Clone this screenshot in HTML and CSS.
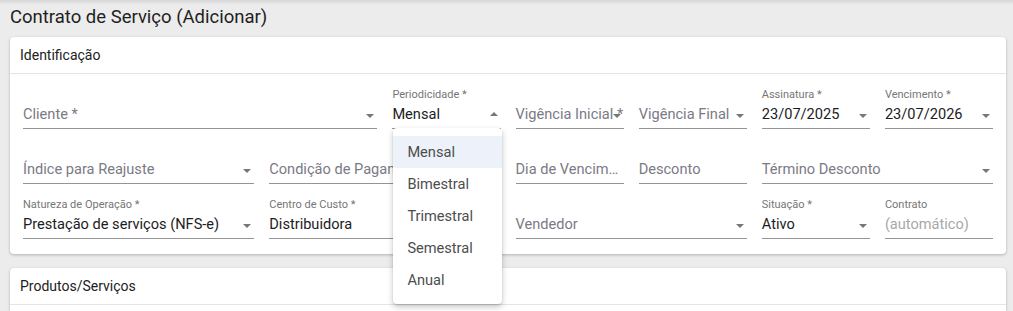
FILE: index.html
```html
<!DOCTYPE html>
<html lang="pt-BR">
<head>
    <meta charset="UTF-8">
    <meta name="viewport" content="width=device-width, initial-scale=1.0">
    <title>Contrato de Serviço</title>
    <link rel="stylesheet" href="styles.css">
</head>
<body>
    <div class="page">
        <h1 class="page-title">Contrato de Serviço (Adicionar)</h1>

        <!-- Identificação -->
        <div class="card">
            <div class="card-header">Identificação</div>
            <div class="card-body form-grid">
                <!-- row 1 -->
                <div class="field span-3">
                    <div class="control"><span class="text placeholder">Cliente *</span><span class="caret"></span></div>
                </div>
                <div class="field open">
                    <label class="float">Periodicidade *</label>
                    <div class="control"><span class="text">Mensal</span><span class="caret up"></span></div>
                    <ul class="menu">
                        <li class="active">Mensal</li>
                        <li>Bimestral</li>
                        <li>Trimestral</li>
                        <li>Semestral</li>
                        <li>Anual</li>
                    </ul>
                </div>
                <div class="field">
                    <div class="control"><span class="text placeholder">Vigência Inicial *</span><span class="caret"></span></div>
                </div>
                <div class="field">
                    <div class="control"><span class="text placeholder">Vigência Final</span><span class="caret"></span></div>
                </div>
                <div class="field">
                    <label class="float">Assinatura *</label>
                    <div class="control"><span class="text">23/07/2025</span><span class="caret"></span></div>
                </div>
                <div class="field">
                    <label class="float">Vencimento *</label>
                    <div class="control"><span class="text">23/07/2026</span><span class="caret"></span></div>
                </div>

                <!-- row 2 -->
                <div class="field span-2">
                    <div class="control"><span class="text placeholder">Índice para Reajuste</span><span class="caret"></span></div>
                </div>
                <div class="field span-2">
                    <div class="control"><span class="text placeholder">Condição de Pagamento</span><span class="caret"></span></div>
                </div>
                <div class="field">
                    <div class="control"><span class="text placeholder ellipsis">Dia de Vencimento</span></div>
                </div>
                <div class="field">
                    <div class="control"><span class="text placeholder">Desconto</span></div>
                </div>
                <div class="field span-2">
                    <div class="control"><span class="text placeholder">Término Desconto</span><span class="caret"></span></div>
                </div>

                <!-- row 3 -->
                <div class="field span-2">
                    <label class="float">Natureza de Operação *</label>
                    <div class="control"><span class="text">Prestação de serviços (NFS-e)</span><span class="caret"></span></div>
                </div>
                <div class="field span-2">
                    <label class="float">Centro de Custo *</label>
                    <div class="control"><span class="text">Distribuidora</span><span class="caret"></span></div>
                </div>
                <div class="field span-2">
                    <div class="control"><span class="text placeholder">Vendedor</span><span class="caret"></span></div>
                </div>
                <div class="field">
                    <label class="float">Situação *</label>
                    <div class="control"><span class="text">Ativo</span><span class="caret"></span></div>
                </div>
                <div class="field">
                    <label class="float">Contrato</label>
                    <div class="control"><span class="text muted">(automático)</span></div>
                </div>
            </div>
        </div>

        <!-- Produtos/Serviços -->
        <div class="card">
            <div class="card-header">Produtos/Serviços</div>
            <div class="card-body empty"></div>
        </div>
    </div>
</body>
</html>
```

FILE: styles.css
```css
body {
    font-family: Roboto, "Liberation Sans", Arial, sans-serif;
    margin: 0;
    padding: 0;
    background: linear-gradient(#d6d6d6 0, #ececec 5px) no-repeat, #ececec;
    color: #212121;
}

.page {
    padding: 0 7px 0 10px;
}

.page-title {
    font-size: 18.5px;
    font-weight: 400;
    line-height: 22px;
    margin: 0;
    padding: 6px 0 9px 0;
    color: #1f1f1f;
}

.card {
    background-color: #fff;
    border-radius: 4px;
    box-shadow: 0 1px 3px rgba(0, 0, 0, 0.25);
    margin-bottom: 14px;
}

.card-header {
    height: 36px;
    line-height: 37px;
    padding: 0 10px;
    font-size: 14px;
    color: #212121;
    border-bottom: 1px solid #e4e4e4;
}

.card-body {
    padding: 10px 13px 15px 13px;
}

.card-body.empty {
    height: 80px;
}

/* form grid */
.form-grid {
    display: grid;
    grid-template-columns: repeat(8, 1fr);
    column-gap: 15px;
    row-gap: 10px;
}

.span-2 {
    grid-column: span 2;
}

.span-3 {
    grid-column: span 3;
}

.field {
    position: relative;
    display: flex;
    flex-direction: column;
    justify-content: flex-end;
    height: 45px;
    box-sizing: border-box;
    border-bottom: 1px solid #949494;
    min-width: 0;
}

.float {
    font-size: 11px;
    line-height: 13px;
    color: #767676;
    margin-bottom: 3px;
    white-space: nowrap;
}

.control {
    display: flex;
    align-items: center;
    height: 20px;
    margin-bottom: 4px;
}

.text {
    flex: 1;
    min-width: 0;
    font-size: 14.6px;
    line-height: 20px;
    white-space: nowrap;
    color: #1c1c24;
}

.text.placeholder {
    color: #7b7a85;
}

.text.muted {
    color: #a8a8a8;
}

.text.ellipsis {
    overflow: hidden;
    text-overflow: ellipsis;
}

.caret {
    flex: none;
    width: 0;
    height: 0;
    margin: 3px 3px 0 4px;
    border-left: 4px solid transparent;
    border-right: 4px solid transparent;
    border-top: 4px solid #777;
}

.caret.up {
    margin-top: -1px;
    border-top: none;
    border-bottom: 4px solid #777;
}

/* dropdown menu */
.menu {
    position: absolute;
    top: 100%;
    left: 1px;
    width: 109px;
    list-style: none;
    margin: 0;
    padding: 8px 0 8px 0;
    background-color: #fff;
    border-radius: 4px;
    box-shadow: 0 3px 6px rgba(0, 0, 0, 0.22), 0 1px 2px rgba(0, 0, 0, 0.12);
    z-index: 10;
}

.menu li {
    height: 32px;
    line-height: 32px;
    padding: 0 14px;
    font-size: 14.6px;
    color: #4d4d4d;
}

.menu li.active {
    background-color: #edf2fa;
}
```
